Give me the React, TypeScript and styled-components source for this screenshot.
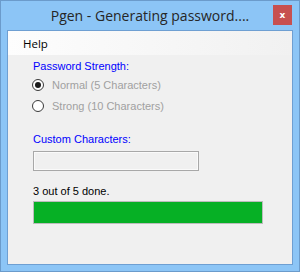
import * as React from 'react';
import styled, {createGlobalStyle} from 'styled-components';

const GlobalStyle = createGlobalStyle`
  html, body {
    margin: 0;
    padding: 0;
    background: #ffffff;
  }
`;

const Window = styled.div`
  width: 300px;
  height: 272px;
  box-sizing: border-box;
  border: 1px solid #6b9bcb;
  background: #8cc5f6;
  display: flex;
  flex-direction: column;
  padding: 0 6px 6px 6px;
`;

const TitleBar = styled.div`
  height: 29px;
  display: grid;
  grid-template-columns: 1fr auto 1fr;
  margin: 0 -6px;
`;

const TitleText = styled.div`
  grid-column: 2;
  font-family: "Open Sans", "Noto Sans", sans-serif;
  font-size: 14px;
  line-height: 29px;
  color: #262626;
  white-space: nowrap;
`;

const CloseButton = styled.div`
  grid-column: 3;
  justify-self: end;
  align-self: start;
  margin-top: 4px;
  margin-right: 7px;
  width: 19px;
  height: 20px;
  background: #c75050;
  display: flex;
  align-items: center;
  justify-content: center;
  color: #ffffff;
  font-family: "DejaVu Sans", sans-serif;
  font-weight: bold;
  font-size: 9px;
`;

const Client = styled.div`
  flex: 1;
  border: 1px solid #6e9fd2;
  background: #f0f0f0;
  display: flex;
  flex-direction: column;
`;

const MenuBar = styled.div`
  height: 24px;
  background: linear-gradient(to right, #fdfdfd, #f1f1f1);
  display: flex;
  align-items: center;
  padding-left: 15px;
  font-family: "Open Sans", "Noto Sans", sans-serif;
  font-size: 11.5px;
  color: #000000;
`;

const Body = styled.div`
  padding: 5px 0 0 25px;
  display: flex;
  flex-direction: column;
  font-family: "Liberation Sans", Arial, sans-serif;
  font-size: 11px;
`;

const Label = styled.div<{$gap: number; $blue?: boolean}>`
  margin-top: ${p => p.$gap}px;
  line-height: 13px;
  height: 13px;
  color: ${p => (p.$blue ? '#0000ff' : '#000000')};
`;

const RadioRow = styled.div<{$gap: number}>`
  margin-top: ${p => p.$gap}px;
  height: 14px;
  display: flex;
  align-items: center;
  gap: 8px;
  color: #a0a0a0;
`;

const RadioCircle = styled.span<{$checked?: boolean}>`
  width: 12px;
  height: 12px;
  box-sizing: border-box;
  border: 1px solid #3a3a3a;
  border-radius: 50%;
  background: #ffffff;
  display: flex;
  align-items: center;
  justify-content: center;
  margin-left: -1px;

  &::after {
    content: '';
    display: ${p => (p.$checked ? 'block' : 'none')};
    width: 6px;
    height: 6px;
    border-radius: 50%;
    background: #1b1b1b;
  }
`;

const TextBox = styled.div`
  margin-top: 5px;
  width: 166px;
  height: 20px;
  box-sizing: border-box;
  border: 1px solid #a8a8a8;
  box-shadow: inset 0 0 0 1px #fafafa;
  background: #f0f0f0;
`;

const ProgressBar = styled.div`
  margin-top: 3px;
  width: 230px;
  height: 23px;
  box-sizing: border-box;
  border: 1px solid #bcbcbc;
  background: #e6e6e6;
`;

const ProgressFill = styled.div`
  height: 100%;
  background: #06b025;
`;

export default function App() {
  const done = 3;
  const total = 5;
  return (
    <>
      <GlobalStyle/>
      <Window>
        <TitleBar>
          <TitleText>Pgen - Generating password....</TitleText>
          <CloseButton>x</CloseButton>
        </TitleBar>
        <Client>
          <MenuBar>Help</MenuBar>
          <Body>
            <Label $gap={0} $blue>Password Strength:</Label>
            <RadioRow $gap={5}>
              <RadioCircle $checked/>
              Normal (5 Characters)
            </RadioRow>
            <RadioRow $gap={7}>
              <RadioCircle/>
              Strong (10 Characters)
            </RadioRow>
            <Label $gap={20} $blue>Custom Characters:</Label>
            <TextBox/>
            <Label $gap={14}>{done} out of {total} done.</Label>
            <ProgressBar>
              {/* the bar in the shot is full even at 3 of 5 */}
              <ProgressFill style={{width: '100%'}}/>
            </ProgressBar>
          </Body>
        </Client>
      </Window>
    </>
  );
}
